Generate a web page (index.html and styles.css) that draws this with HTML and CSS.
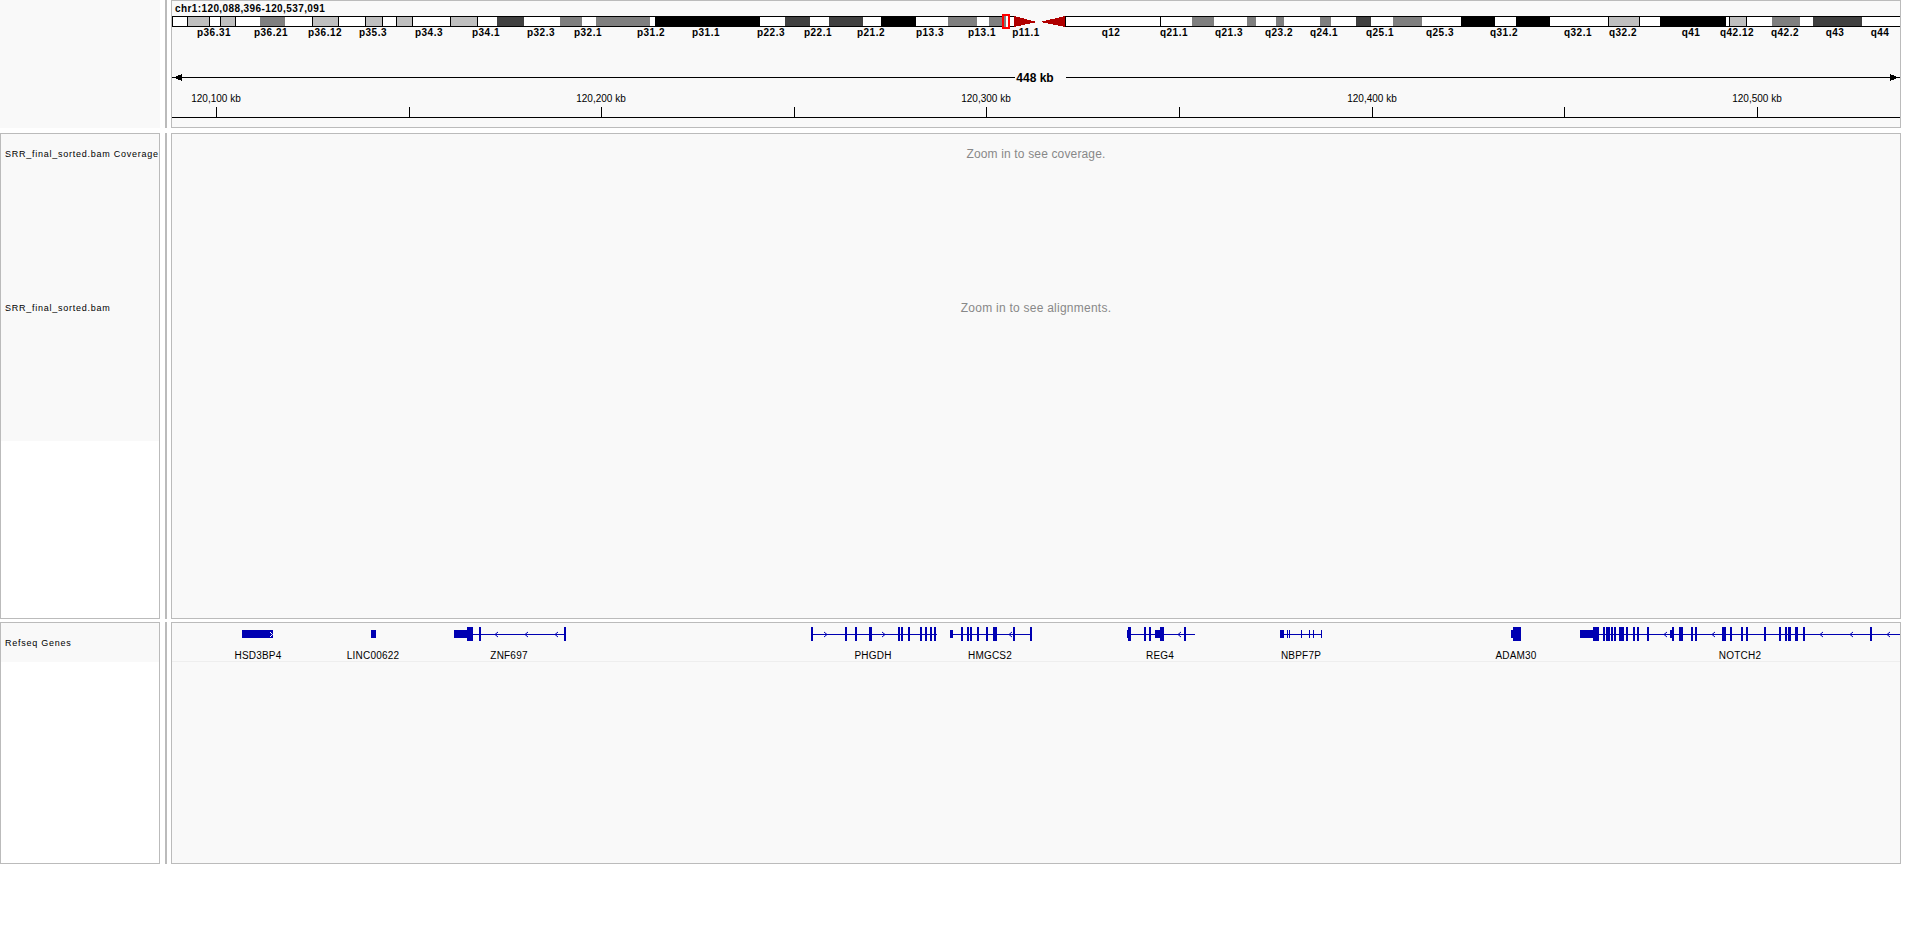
FILE: index.html
```html
<!DOCTYPE html>
<html lang="en">
<head>
    <meta charset="utf-8">
    <title>IGV - chr1:120,088,396-120,537,091</title>
    <link rel="stylesheet" href="styles.css">
</head>
<body>
    <div class="igv">
        <section class="row row-header">
            <div class="names names-header"></div>
            <div class="gutter"></div>
            <div class="data">
                <svg class="canvas" viewBox="172 1 1728 125" width="1728" height="125">
                    <text class="locus" x="175" y="12">chr1:120,088,396-120,537,091</text>

                    <!-- ideogram: p arm, q arm, then stained bands -->
                    <rect class="arm" x="172.5" y="16.5" width="842" height="10"/>
                    <rect class="arm" x="1065.5" y="16.5" width="835" height="10"/>
                    <g class="gpos25">
                        <rect x="188" y="17" width="22" height="9"/>
                        <rect x="221" y="17" width="14" height="9"/>
                        <rect x="313" y="17" width="25" height="9"/>
                        <rect x="366" y="17" width="16" height="9"/>
                        <rect x="397" y="17" width="15" height="9"/>
                        <rect x="451" y="17" width="26" height="9"/>
                        <rect x="1609" y="17" width="30" height="9"/>
                        <rect x="1730" y="17" width="16" height="9"/>
                    </g>
                    <g class="gpos50">
                        <rect x="260" y="17" width="25" height="9"/>
                        <rect x="560" y="17" width="22" height="9"/>
                        <rect x="596" y="17" width="54" height="9"/>
                        <rect x="948" y="17" width="29" height="9"/>
                        <rect x="989" y="17" width="13" height="9"/>
                        <rect x="1192" y="17" width="22" height="9"/>
                        <rect x="1247" y="17" width="9" height="9"/>
                        <rect x="1276" y="17" width="8" height="9"/>
                        <rect x="1320" y="17" width="11" height="9"/>
                        <rect x="1393" y="17" width="29" height="9"/>
                        <rect x="1772" y="17" width="28" height="9"/>
                    </g>
                    <g class="gpos75">
                        <rect x="497" y="17" width="27" height="9"/>
                        <rect x="785" y="17" width="25" height="9"/>
                        <rect x="829" y="17" width="34" height="9"/>
                        <rect x="1356" y="17" width="15" height="9"/>
                        <rect x="1813" y="17" width="49" height="9"/>
                    </g>
                    <g class="gpos100">
                        <rect x="655" y="16" width="105" height="11"/>
                        <rect x="881" y="16" width="35" height="11"/>
                        <rect x="1461" y="16" width="34" height="11"/>
                        <rect x="1516" y="16" width="34" height="11"/>
                        <rect x="1660" y="16" width="66" height="11"/>
                    </g>
                    <!-- thin band edges -->
                    <path class="rule" d="M187.500 17v9M209.500 17v9M220.500 17v9M235.500 17v9M312.500 17v9M338.500 17v9M365.500 17v9M382.500 17v9M396.500 17v9M412.500 17v9M450.500 17v9M477.500 17v9M1160.500 17v9M1608.500 17v9M1639.500 17v9M1729.500 17v9M1746.500 17v9"/>
                    <polygon class="centromere" points="1014,16 1014,27 1037,22"/>
                    <polygon class="centromere" points="1065,16 1065,27 1040,22"/>

                    <!-- current view marker -->
                    <rect class="view-fill" x="1004" y="16" width="4" height="11"/>
                    <rect class="view-mark" x="1004" y="16" width="2" height="11"/>
                    <rect class="view-box" x="1003" y="15" width="6" height="13"/>

                    <g class="bands">
                        <text x="214" y="36">p36.31</text>
                        <text x="271" y="36">p36.21</text>
                        <text x="325" y="36">p36.12</text>
                        <text x="373" y="36">p35.3</text>
                        <text x="429" y="36">p34.3</text>
                        <text x="486" y="36">p34.1</text>
                        <text x="541" y="36">p32.3</text>
                        <text x="588" y="36">p32.1</text>
                        <text x="651" y="36">p31.2</text>
                        <text x="706" y="36">p31.1</text>
                        <text x="771" y="36">p22.3</text>
                        <text x="818" y="36">p22.1</text>
                        <text x="871" y="36">p21.2</text>
                        <text x="930" y="36">p13.3</text>
                        <text x="982" y="36">p13.1</text>
                        <text x="1026" y="36">p11.1</text>
                        <text x="1111" y="36">q12</text>
                        <text x="1174" y="36">q21.1</text>
                        <text x="1229" y="36">q21.3</text>
                        <text x="1279" y="36">q23.2</text>
                        <text x="1324" y="36">q24.1</text>
                        <text x="1380" y="36">q25.1</text>
                        <text x="1440" y="36">q25.3</text>
                        <text x="1504" y="36">q31.2</text>
                        <text x="1578" y="36">q32.1</text>
                        <text x="1623" y="36">q32.2</text>
                        <text x="1691" y="36">q41</text>
                        <text x="1737" y="36">q42.12</text>
                        <text x="1785" y="36">q42.2</text>
                        <text x="1835" y="36">q43</text>
                        <text x="1880" y="36">q44</text>
                    </g>

                    <!-- span arrow -->
                    <rect class="ink" x="172" y="77" width="843" height="1"/>
                    <rect class="ink" x="1066" y="77" width="834" height="1"/>
                    <polygon class="ink" points="173,77.5 182,74 182,81"/>
                    <polygon class="ink" points="1899,77.5 1890,74 1890,81"/>
                    <text class="span" x="1035" y="82">448 kb</text>

                    <!-- ruler -->
                    <g class="ticks">
                        <text x="216" y="102">120,100 kb</text>
                        <text x="601" y="102">120,200 kb</text>
                        <text x="986" y="102">120,300 kb</text>
                        <text x="1372" y="102">120,400 kb</text>
                        <text x="1757" y="102">120,500 kb</text>
                    </g>
                    <path class="rule" d="M216.5 107v10M409.5 107v10M601.5 107v10M794.5 107v10M986.5 107v10M1179.5 107v10M1372.5 107v10M1564.5 107v10M1757.5 107v10M172 117.5h1728"/>
                </svg>
            </div>
        </section>

        <section class="row row-reads">
            <div class="names">
                <div class="track track-coverage"><span class="name">SRR_final_sorted.bam Coverage</span></div>
                <div class="track track-reads"><span class="name">SRR_final_sorted.bam</span></div>
            </div>
            <div class="gutter"></div>
            <div class="data">
                <div class="track track-coverage msg msg-small">Zoom in to see coverage.</div>
                <div class="track track-reads msg">Zoom in to see alignments.</div>
            </div>
        </section>

        <section class="row row-genes">
            <div class="names">
                <div class="track track-genes"><span class="name">Refseq Genes</span></div>
            </div>
            <div class="gutter"></div>
            <div class="data">
                <svg class="canvas" viewBox="172 623 1728 40" width="1728" height="40">
                    <g class="lines">
                        <path d="M473 634.5h92M811 634.5h126M950 634.5h82M1127 634.5h68M1280 634.5h42M1599 634.5h301"/>
                    </g>
                    <g class="blocks">
                        <rect x="242" y="630" width="31" height="8"/>
                        <rect x="371" y="630" width="5" height="8"/>
                        <rect x="454" y="630" width="13" height="8"/>
                        <rect x="467" y="627" width="6" height="14"/>
                        <rect x="869" y="627" width="3" height="14"/>
                        <rect x="950" y="630" width="3" height="8"/>
                        <rect x="993" y="627" width="4" height="14"/>
                        <rect x="1127" y="630" width="1" height="8"/>
                        <rect x="1128" y="627" width="3" height="14"/>
                        <rect x="1155" y="630" width="5" height="8"/>
                        <rect x="1160" y="627" width="4" height="14"/>
                        <rect x="1280" y="630" width="4" height="8"/>
                        <rect x="1511" y="630" width="2" height="8"/>
                        <rect x="1513" y="627" width="8" height="14"/>
                        <rect x="1580" y="630" width="13" height="8"/>
                        <rect x="1593" y="627" width="6" height="14"/>
                        <rect x="1619" y="627" width="5" height="14"/>
                        <rect x="1670" y="630" width="2" height="8"/>
                        <rect x="1672" y="627" width="2" height="14"/>
                        <rect x="1679" y="627" width="4" height="14"/>
                        <rect x="1722" y="627" width="4" height="14"/>
                        <rect x="1788" y="627" width="3" height="14"/>
                        <rect x="1795" y="627" width="3" height="14"/>
                    </g>
                    <!-- single exons -->
                    <path class="exons" d="M480 627v14M565 627v14M812 627v14M846 627v14M856 627v14M899 627v14M902 627v14M909 627v14M921 627v14M926 627v14M931 627v14M935 627v14M962 627v14M968 627v14M971 627v14M978 627v14M987 627v14M1014 627v14M1031 627v14M1145 627v14M1150 627v14M1185 627v14M1604 627v14M1607 627v14M1609 627v14M1612 627v14M1615 627v14M1627 627v14M1634 627v14M1638 627v14M1648 627v14M1692 627v14M1696 627v14M1731 627v14M1742 627v14M1747 627v14M1765 627v14M1780 627v14M1786 627v14M1804 627v14M1871 627v14"/>
                    <path class="exons-thin" d="M1287.5 630v8M1289.5 630v8M1301.5 630v8M1309.5 630v8M1313.5 630v8M1321.5 630v8"/>
                    <path class="chevrons" d="M498 632l-3 2.500 3 2.500M528 632l-3 2.500 3 2.500M558 632l-3 2.500 3 2.500M824 632l3 2.500-3 2.500M882 632l3 2.500-3 2.500M1012 632l-3 2.500 3 2.500M1181 632l-3 2.500 3 2.500M1667 632l-3 2.500 3 2.500M1715 632l-3 2.500 3 2.500M1823 632l-3 2.500 3 2.500M1853 632l-3 2.500 3 2.500M1890 632l-3 2.500 3 2.500"/>
                    <path class="chevrons chevrons-light" d="M270 632l2.500 2.500-2.500 2.500"/>
                    <g class="genes">
                        <text x="258" y="659">HSD3BP4</text>
                        <text x="373" y="659">LINC00622</text>
                        <text x="509" y="659">ZNF697</text>
                        <text x="873" y="659">PHGDH</text>
                        <text x="990" y="659">HMGCS2</text>
                        <text x="1160" y="659">REG4</text>
                        <text x="1301" y="659">NBPF7P</text>
                        <text x="1516" y="659">ADAM30</text>
                        <text x="1740" y="659">NOTCH2</text>
                    </g>
                    <rect class="track-line" x="172" y="661" width="1728" height="1"/>
                </svg>
            </div>
        </section>
    </div>
</body>
</html>
```

FILE: styles.css
```css
body {
    margin: 0;
    background: #fff;
    font-family: "Liberation Sans", Arial, sans-serif;
    font-size: 10px;
    color: #000;
}

.igv {
    width: 1901px;
}

.row {
    display: flex;
}

.row-header {
    height: 128px;
}

.row-reads {
    height: 486px;
    margin-top: 5px;
}

.row-genes {
    height: 242px;
    margin-top: 3px;
}

.names {
    width: 160px;
    box-sizing: border-box;
    border: 1px solid #bbb;
    background: #fff;
}

.names-header {
    border: 0;
    background: #f9f9f9;
}

.gutter {
    width: 2px;
    margin: 0 4px 0 5px;
    background: #bbb;
}

.data {
    width: 1730px;
    box-sizing: border-box;
    border: 1px solid #bbb;
    background: #f9f9f9;
}

.canvas {
    display: block;
    shape-rendering: crispEdges;
}

/* track rows */
.track {
    display: flex;
    align-items: center;
    background: #f9f9f9;
}

.track-coverage {
    height: 40px;
}

.track-reads {
    height: 267px;
}

.track-genes {
    height: 39px;
}

.name {
    padding-left: 4px;
    font-size: 9px;
    letter-spacing: 0.75px;
    white-space: nowrap;
}

.msg {
    justify-content: center;
    color: #888;
    font-size: 12px;
    letter-spacing: 0.25px;
}

.msg-small {
    letter-spacing: 0.15px;
}

/* header */
.locus {
    font-size: 10px;
    font-weight: bold;
    letter-spacing: 0.4px;
}

.arm {
    fill: #fff;
    stroke: #000;
    stroke-width: 1;
}

.gpos25 { fill: #bfbfbf; }
.gpos50 { fill: #7f7f7f; }
.gpos75 { fill: #404040; }
.gpos100 { fill: #000; }
.centromere { fill: #b00000; }

.view-fill { fill: #fff; }
.view-mark { fill: #7f7f7f; }

.view-box {
    fill: none;
    stroke: #f00;
    stroke-width: 2;
}

.bands text {
    font-size: 10px;
    font-weight: bold;
    letter-spacing: 0.5px;
    text-anchor: middle;
}

.ink { fill: #000; }

.span {
    font-size: 12px;
    font-weight: bold;
    text-anchor: middle;
}

.ticks text {
    font-size: 10px;
    text-anchor: middle;
}

.rule {
    fill: none;
    stroke: #000;
    stroke-width: 1;
}

/* gene track */
.lines path {
    fill: none;
    stroke: #0000b2;
    stroke-width: 1;
}

.blocks { fill: #0000b2; }

.exons {
    fill: none;
    stroke: #0000b2;
    stroke-width: 2;
}

.exons-thin {
    fill: none;
    stroke: #0000b2;
    stroke-width: 1;
}

.chevrons {
    fill: none;
    stroke: #0000b2;
    stroke-width: 1;
    shape-rendering: geometricPrecision;
}

.chevrons-light {
    stroke: #fff;
}

.genes text {
    font-size: 10px;
    letter-spacing: 0.2px;
    text-anchor: middle;
}

.track-line { fill: #eee; }
```
